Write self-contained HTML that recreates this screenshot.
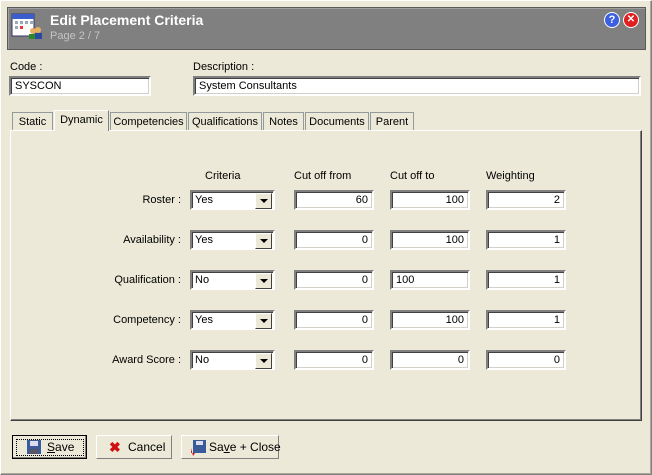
<!DOCTYPE html><html><head><style>
body{margin:0;width:652px;height:475px;background:#ECE9D8;font-family:"Liberation Sans",sans-serif;font-size:11px;color:#000;position:relative;overflow:hidden}
.a{position:absolute;white-space:nowrap}
.win{left:0;top:0;width:650px;height:473px;border:1px solid;border-color:#fff #808080 #808080 #fff;box-shadow:inset -1px -1px 0 #aca899}
.hdr{left:7px;top:7px;width:637px;height:41px;background:#808080;border:1px solid #5a5a5a;box-shadow:inset 1px 1px 0 #a0a0a0}
.inp{background:#fff;border:2px solid;border-color:#808080 #fff #fff #808080;box-shadow:inset 1px 1px 0 #404040,inset -1px -1px 0 #d4d0c8;height:20px;box-sizing:border-box;line-height:16px;padding:0 4px}
.num{text-align:right}
.sel{box-sizing:border-box;height:20px;width:85px;background:#fff;border:2px solid;border-color:#808080 #fff #fff #808080;box-shadow:inset 1px 1px 0 #404040;padding-left:3px;line-height:16px}
.sel b{position:absolute;right:1px;top:1px;width:15px;height:14px;background:#ECE9D8;border:1px solid;border-color:#fff #404040 #404040 #fff}
.sel b:after{content:"";position:absolute;left:4px;top:5px;border:4px solid transparent;border-top:4px solid #000;border-bottom:0}
.tab{top:112px;height:18px;border:1px solid #919b9c;border-bottom:none;line-height:18px;text-align:center;background:#ECE9D8;box-sizing:border-box}
.panel{left:10px;top:130px;width:630px;height:289px;border:1px solid;border-color:#fff #404040 #404040 #fff;box-shadow:inset -1px -1px 0 #808080}
.btn{top:435px;height:24px;border:1px solid;border-color:#fff #808080 #808080 #fff;background:#ECE9D8;box-sizing:border-box;line-height:22px;font-size:12px}
.lbl{text-align:right;width:100px;left:81px}
</style></head><body>
<div class="a win"></div>
<div class="a hdr"></div>
<svg class="a" style="left:11px;top:12px" width="32" height="28"><rect x="1" y="2" width="22" height="22" fill="#fff" stroke="#336"/><rect x="1" y="2" width="22" height="5" fill="#3a5fcd"/><g fill="#9ab"><rect x="4" y="9" width="3" height="3"/><rect x="9" y="9" width="3" height="3"/><rect x="14" y="9" width="3" height="3"/><rect x="4" y="14" width="3" height="3"/><rect x="19" y="9" width="3" height="3"/></g><rect x="9" y="14" width="3" height="3" fill="#e33"/><circle cx="22" cy="19" r="3" fill="#e8b060"/><rect x="18" y="22" width="8" height="5" fill="#2a8a2a"/><circle cx="27" cy="18" r="3" fill="#e8b060"/><rect x="24" y="21" width="7" height="6" fill="#2a4aa0"/></svg>
<div class="a" style="left:50px;top:12px;color:#fff;font-size:14px;font-weight:bold">Edit Placement Criteria</div>
<div class="a" style="left:50px;top:30px;color:#c4c4c4;font-size:11px">Page 2 / 7</div>
<div class="a" style="left:604px;top:12px;width:14px;height:14px;border-radius:50%;background:#3a5fe0;color:#fff;font-weight:bold;font-size:11px;text-align:center;line-height:14px;border:1px solid #fff">?</div>
<div class="a" style="left:623px;top:12px;width:14px;height:14px;border-radius:50%;background:#e02020;color:#fff;font-weight:bold;font-size:10px;text-align:center;line-height:14px;border:1px solid #fff">✕</div>
<div class="a" style="left:10px;top:61px">Code :</div>
<div class="a inp" style="left:9px;top:76px;width:142px">SYSCON</div>
<div class="a" style="left:193px;top:61px">Description :</div>
<div class="a inp" style="left:193px;top:76px;width:448px">System Consultants</div>
<div class="a panel"></div>
<div class="a tab" style="left:12px;width:41px">Static</div>
<div class="a tab" style="left:54px;top:110px;height:21px;width:55px;border-color:#fff;border-right-color:#808080;line-height:18px">Dynamic</div>
<div class="a tab" style="left:110px;width:77px">Competencies</div>
<div class="a tab" style="left:188px;width:74px">Qualifications</div>
<div class="a tab" style="left:263px;width:41px">Notes</div>
<div class="a tab" style="left:305px;width:64px">Documents</div>
<div class="a tab" style="left:370px;width:44px">Parent</div>
<div class="a" style="left:205px;top:170px">Criteria</div>
<div class="a" style="left:294px;top:170px">Cut off from</div>
<div class="a" style="left:390px;top:170px">Cut off to</div>
<div class="a" style="left:486px;top:170px">Weighting</div>
<div class="a lbl" style="top:194px">Roster :</div>
<div class="a sel" style="left:190px;top:190px">Yes<b></b></div>
<div class="a inp num" style="left:294px;top:190px;width:80px">60</div>
<div class="a inp num" style="left:390px;top:190px;width:80px">100</div>
<div class="a inp num" style="left:486px;top:190px;width:80px">2</div>
<div class="a lbl" style="top:234px">Availability :</div>
<div class="a sel" style="left:190px;top:230px">Yes<b></b></div>
<div class="a inp num" style="left:294px;top:230px;width:80px">0</div>
<div class="a inp num" style="left:390px;top:230px;width:80px">100</div>
<div class="a inp num" style="left:486px;top:230px;width:80px">1</div>
<div class="a lbl" style="top:274px">Qualification :</div>
<div class="a sel" style="left:190px;top:270px">No<b></b></div>
<div class="a inp num" style="left:294px;top:270px;width:80px">0</div>
<div class="a inp" style="left:390px;top:270px;width:80px">100</div>
<div class="a inp num" style="left:486px;top:270px;width:80px">1</div>
<div class="a lbl" style="top:314px">Competency :</div>
<div class="a sel" style="left:190px;top:310px">Yes<b></b></div>
<div class="a inp num" style="left:294px;top:310px;width:80px">0</div>
<div class="a inp num" style="left:390px;top:310px;width:80px">100</div>
<div class="a inp num" style="left:486px;top:310px;width:80px">1</div>
<div class="a lbl" style="top:354px">Award Score :</div>
<div class="a sel" style="left:190px;top:350px">No<b></b></div>
<div class="a inp num" style="left:294px;top:350px;width:80px">0</div>
<div class="a inp num" style="left:390px;top:350px;width:80px">0</div>
<div class="a inp num" style="left:486px;top:350px;width:80px">0</div>
<div class="a btn" style="left:12px;width:75px;border:1px solid #000;box-shadow:inset -1px -1px 0 #808080"><div class="a" style="left:3px;top:3px;width:66px;height:15px;border:1px dotted #000"></div>
<svg class="a" style="left:14px;top:4px" width="14" height="14"><rect x="0" y="0" width="14" height="14" fill="#3a5a9a"/><rect x="3" y="1" width="8" height="5" fill="#dde"/><rect x="3" y="9" width="8" height="5" fill="#556"/></svg><span class="a" style="left:34px;top:0"><u>S</u>ave</span></div>
<div class="a btn" style="left:96px;width:76px"><span class="a" style="left:12px;top:0;color:#d01010;font-weight:bold;font-size:14px">✖</span><span class="a" style="left:31px;top:0">Cancel</span></div>
<div class="a btn" style="left:181px;width:98px"><svg class="a" style="left:8px;top:4px" width="16" height="16"><rect x="3" y="0" width="13" height="13" fill="#3a5a9a"/><rect x="6" y="1" width="7" height="4" fill="#dde"/><path d="M1 8v5h4l-2 3z" fill="#d01010"/></svg><span class="a" style="left:27px;top:0">Sa<u>v</u>e + Close</span></div>
</body></html>
